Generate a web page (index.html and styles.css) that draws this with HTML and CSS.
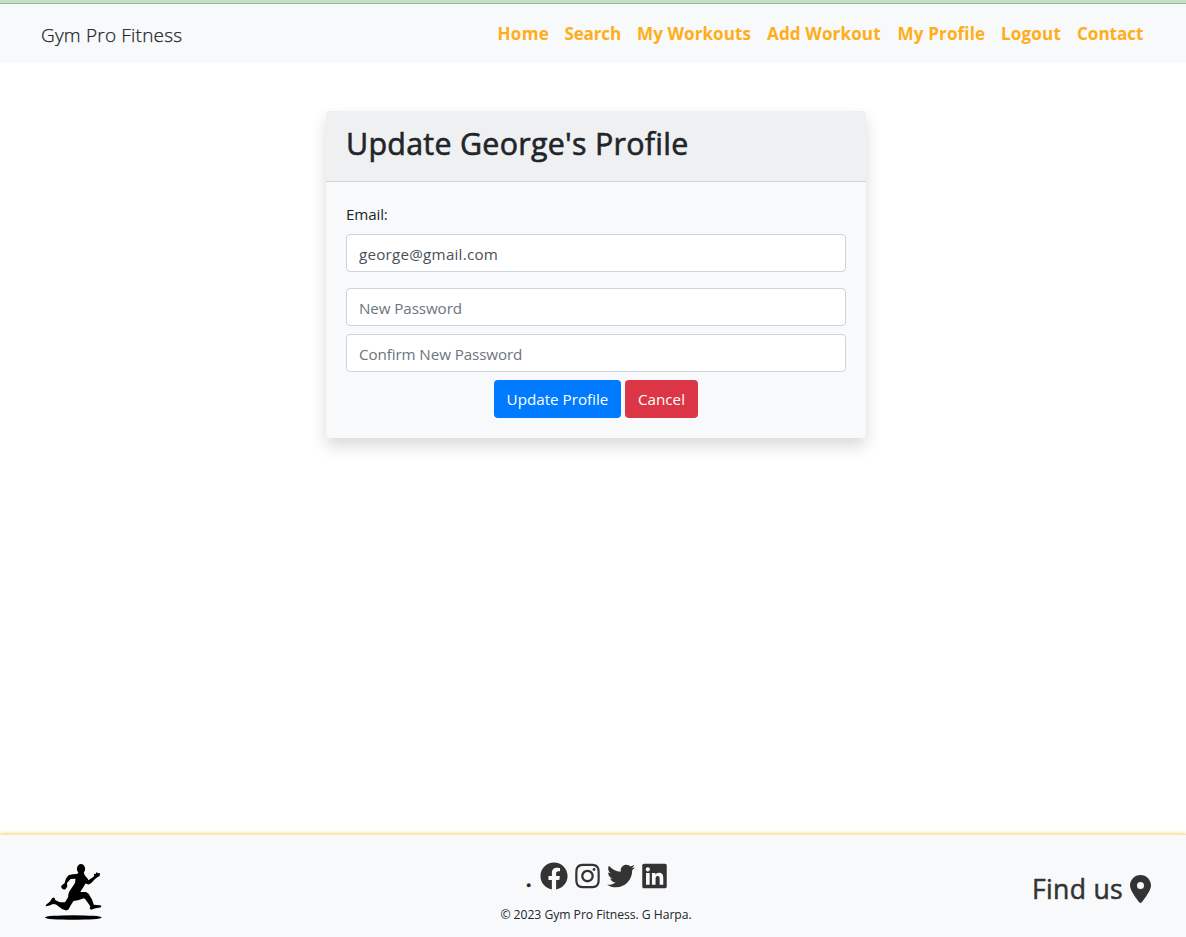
FILE: index.html
```html
<!DOCTYPE html>
<html lang="en">
<head>
<meta charset="utf-8">
<title>Gym Pro Fitness</title>
<link rel="stylesheet" href="styles.css">
</head>
<body>
<header class="navbar">
  <a class="brand">Gym Pro Fitness</a>
  <nav class="nav-links">
    <a class="w-home">Home</a><a class="w-search">Search</a><a class="w-workouts">My Workouts</a><a class="w-add">Add Workout</a><a class="w-profile">My Profile</a><a class="w-logout">Logout</a><a class="w-contact">Contact</a>
  </nav>
</header>
<main class="content">
  <section class="card">
    <div class="card-header"><h2><span>Update George's Profile</span></h2></div>
    <form class="card-body">
      <label for="email"><span>Email:</span></label>
      <input class="field email" id="email" type="text" value="george@gmail.com">
      <input class="field password" type="password" placeholder="New Password">
      <input class="field confirm" type="password" placeholder="Confirm New Password">
      <div class="actions">
        <button class="btn btn-primary" type="button">Update Profile</button>
        <button class="btn btn-danger" type="button">Cancel</button>
      </div>
    </form>
  </section>
</main>
<footer class="footer">
  <svg class="logo" viewBox="0 0 60 60">
    <ellipse cx="29.3" cy="54.5" rx="28.3" ry="2.3"/>
    <ellipse cx="37" cy="5.9" rx="4.1" ry="4.8"/>
    <!-- torso and arms -->
    <path d="M34.500 9.500L40 9.500 40.500 12 43.500 15.500 44.500 17.300 50.200 13.200 49.800 10.800 51.600 11 52.800 8.900 53.800 10.300 56 10 55.600 13 53 14.600 50.600 16.500 47 20.300 44.500 21.500 41.500 20.500 39.500 24 36.500 28.500 36 31 33 36 24 33.500 25 29 28 24.500 31 20 31.500 15.800 26.500 16 23 20 23.300 23.500 21.300 26.600 18.600 26.300 16.900 23.800 18.600 21.500 20.400 20.500 22 15.500 24.500 12.200 28.500 11.300 33 10.900z"/>
    <!-- legs -->
    <path d="M26 30.500L36 29 42 29 44.800 31 48 36.500 49.800 41.800 56 42.300 57.500 42.800 56.500 44.500 51.500 45.300 47.200 46.800 45.700 45.800 46.300 43.300 41.500 36.500 40 35.200 34 37.200 29.500 38 26.300 43 24.500 46.500 22 47.500 18 46 12 41.600 9 40.900 5.500 42.500 1.800 43.200 1.800 42 6 38.600 8.300 35 10.300 34.600 11.500 37.300 16 39.300 21 39.300 23 36z"/>
  </svg>
  <div class="footer-center">
    <div class="social">
      <span class="dot">.</span>
      <svg class="icon-wide" viewBox="0 0 512 512"><path d="M504 256C504 119 393 8 256 8S8 119 8 256c0 123.78 90.69 226.38 209.25 245V327.69h-63V256h63v-54.64c0-62.15 37-96.48 93.67-96.48 27.14 0 55.52 4.84 55.52 4.84v61h-31.28c-30.8 0-40.41 19.12-40.41 38.73V256h68.78l-11 71.69h-57.78V501C413.31 482.38 504 379.78 504 256z"/></svg>
      <svg class="icon" viewBox="0 0 448 512"><path d="M224.1 141c-63.6 0-114.9 51.3-114.9 114.9s51.3 114.9 114.9 114.9S339 319.500 339 255.900 287.700 141 224.100 141zm0 189.600c-41.100 0-74.700-33.500-74.700-74.700s33.500-74.700 74.700-74.700 74.700 33.500 74.700 74.700-33.600 74.700-74.700 74.700zm146.400-194.300c0 14.900-12 26.800-26.800 26.800-14.900 0-26.800-12-26.800-26.800s12-26.800 26.800-26.800 26.800 12 26.800 26.800zm76.100 27.200c-1.700-35.900-9.900-67.700-36.200-93.900-26.200-26.200-58-34.400-93.900-36.200-37-2.100-147.900-2.100-184.900 0-35.800 1.700-67.600 9.900-93.900 36.100s-34.400 58-36.200 93.900c-2.100 37-2.100 147.900 0 184.900 1.700 35.900 9.900 67.700 36.200 93.900s58 34.400 93.900 36.200c37 2.100 147.900 2.100 184.900 0 35.900-1.700 67.700-9.900 93.900-36.200 26.200-26.200 34.400-58 36.200-93.900 2.100-37 2.100-147.800 0-184.800zM398.800 388c-7.800 19.600-22.900 34.700-42.600 42.600-29.500 11.700-99.500 9-132.100 9s-102.700 2.600-132.100-9c-19.600-7.800-34.700-22.900-42.600-42.600-11.700-29.500-9-99.500-9-132.100s-2.600-102.700 9-132.100c7.800-19.600 22.900-34.700 42.600-42.600 29.500-11.700 99.500-9 132.100-9s102.700-2.600 132.100 9c19.600 7.800 34.700 22.900 42.600 42.600 11.700 29.500 9 99.500 9 132.100s2.700 102.700-9 132.100z"/></svg>
      <svg class="icon-wide" viewBox="0 0 512 512"><path d="M459.37 151.716c.325 4.548.325 9.097.325 13.645 0 138.72-105.583 298.558-298.558 298.558-59.452 0-114.680-17.219-161.137-47.106 8.447.974 16.568 1.299 25.340 1.299 49.055 0 94.213-16.568 130.274-44.832-46.132-.975-84.792-31.188-98.112-72.772 6.498.974 12.995 1.624 19.818 1.624 9.421 0 18.843-1.300 27.614-3.573-48.081-9.747-84.143-51.980-84.143-102.985v-1.299c13.969 7.797 30.214 12.670 47.431 13.319-28.264-18.843-46.781-51.005-46.781-87.391 0-19.492 5.197-37.360 14.294-52.954 51.655 63.675 129.300 105.258 216.365 109.807-1.624-7.797-2.599-15.918-2.599-24.040 0-57.828 46.782-104.934 104.934-104.934 30.213 0 57.502 12.670 76.670 33.137 23.715-4.548 46.456-13.320 66.599-25.340-7.798 24.366-24.366 44.833-46.132 57.827 21.117-2.273 41.584-8.122 60.426-16.243-14.292 20.791-32.161 39.308-52.628 54.253z"/></svg>
      <svg class="icon" viewBox="0 0 448 512"><path d="M416 32H31.900C14.300 32 0 46.500 0 64.300v383.400C0 465.500 14.300 480 31.900 480H416c17.600 0 32-14.500 32-32.300V64.300c0-17.800-14.400-32.300-32-32.300zM135.400 416H69V202.200h66.500V416zm-33.200-243c-21.300 0-38.500-17.300-38.500-38.500S80.900 96 102.200 96c21.200 0 38.500 17.300 38.500 38.500 0 21.300-17.200 38.500-38.500 38.500zm282.100 243h-66.400V312c0-24.800-.5-56.700-34.500-56.700-34.600 0-39.900 27-39.900 54.900V416h-66.400V202.200h63.700v29.200h.9c8.900-16.800 30.600-34.500 62.900-34.500 67.200 0 79.700 44.300 79.700 101.900V416z"/></svg>
    </div>
    <p class="copyright"><span>© 2023 Gym Pro Fitness. G Harpa.</span></p>
  </div>
  <div class="find"><span>Find us</span>
    <svg class="pin" viewBox="0 0 384 512"><path d="M215.700 499.200C267 435 384 279.400 384 192 384 86 298 0 192 0S0 86 0 192c0 87.400 117 243 168.300 307.200 12.300 15.300 35.100 15.300 47.400 0zM192 128a64 64 0 1 1 0 128 64 64 0 1 1 0-128z"/></svg>
  </div>
</footer>
</body>
</html>
```
FILE: styles.css
```css
* { box-sizing: border-box; }
body {
  margin: 0;
  height: 937px;
  display: flex;
  flex-direction: column;
  font-family: "Open Sans", "Noto Sans", sans-serif;
  font-size: 15.2px;
  color: #212529;
  background: #fff;
  border-top: 3px solid #c3e2c4;
  overflow: hidden;
}
.navbar {
  height: 60px;
  border-top: 1px solid #9db8a0;
  background: #f8f9fb;
  display: flex;
  justify-content: space-between;
  padding: 0 43px 0 41px;
  line-height: 60px;
  white-space: nowrap;
}
.brand {
  font-size: 19px;
  font-weight: 300;
  letter-spacing: .2px;
  padding-top: 1px;
  -webkit-text-stroke: .25px #212529;
}
.nav-links {
  display: flex;
  gap: 16px;
  font-size: 17.1px;
  font-weight: 700;
  color: #ffae1a;
}
.w-home { width: 51px; letter-spacing: .25px; }
.w-search { width: 56.500px; letter-spacing: -.2px; }
.w-workouts { width: 114px; letter-spacing: .05px; }
.w-add { width: 114.500px; letter-spacing: .1px; }
.w-profile { width: 87.500px; letter-spacing: .12px; }
.w-logout { width: 60px; letter-spacing: .15px; }
.w-contact { width: 66px; letter-spacing: -.05px; }
.content { flex: 1; padding: 48px 0 0 326px; }
.card {
  width: 540px;
  height: 327px;
  border-radius: 4px;
  background: #f8f9fb;
  box-shadow: 0 8px 16px rgba(0, 0, 0, .15);
}
.card-header {
  height: 71px;
  padding: 12px 20px;
  background: #eff0f2;
  border-bottom: 1px solid #ced2d6;
  border-radius: 4px 4px 0 0;
}
h2 {
  margin: 0;
  font-size: 30.4px;
  line-height: 42px;
  font-weight: 400;
  letter-spacing: .28px;
  white-space: nowrap;
  -webkit-text-stroke: .6px #212529;
}
.card-body { padding: 20px; display: flex; flex-direction: column; }
label { height: 32px; line-height: 25px; letter-spacing: -.15px; }
.field {
  width: 100%;
  height: 38px;
  padding: 8px 12px 6px;
  border: 1px solid #ced4da;
  border-radius: 4px;
  background: #fff;
  color: #495057;
  font: 15.2px "Open Sans", sans-serif;
  letter-spacing: -.1px;
}
.field::placeholder { color: #6c757d; opacity: 1; }
.email { margin-bottom: 16px; letter-spacing: .23px; }
.password, .confirm { margin-bottom: 8px; }
.actions { display: flex; justify-content: center; gap: 4px; }
.btn {
  height: 38px;
  padding: 0;
  border: 0;
  border-radius: 4px;
  color: #fff;
  font: 15.2px "Open Sans", sans-serif;
  white-space: nowrap;
}
.btn-primary { width: 127px; background: #007bff; }
.btn-danger { width: 73px; background: #dc3545; }
.footer {
  height: 103px;
  padding: 0 35px 0 44px;
  background: #f8f9fb;
  border-top: 1px solid #ffe2a8;
  box-shadow: 0 0 4px #ffc04d;
  display: grid;
  grid-template-columns: 300px 1fr 300px;
}
.logo { width: 60px; height: 60px; margin-top: 28px; }
.footer-center { display: flex; flex-direction: column; align-items: center; padding: 27px 3px 0 0; }
.social { display: flex; gap: 7px; height: 28px; fill: #333; }
.dot { font-size: 28px; line-height: 28px; width: 8px; -webkit-text-stroke: .6px #212529; }
.icon-wide { width: 28px; height: 28px; }
.icon { width: 25px; height: 28px; }
.copyright { margin: 15px 0 0; font-size: 12.2px; line-height: 20px; letter-spacing: -.05px; white-space: nowrap; }
.find {
  display: flex;
  justify-content: flex-end;
  gap: 7px;
  padding-top: 40px;
  color: #333;
  font-size: 26.6px;
  line-height: 28px;
  letter-spacing: .3px;
  -webkit-text-stroke: .5px #333;
}
.pin { width: 21px; height: 28px; fill: #333; -webkit-text-stroke: 0; }
```
